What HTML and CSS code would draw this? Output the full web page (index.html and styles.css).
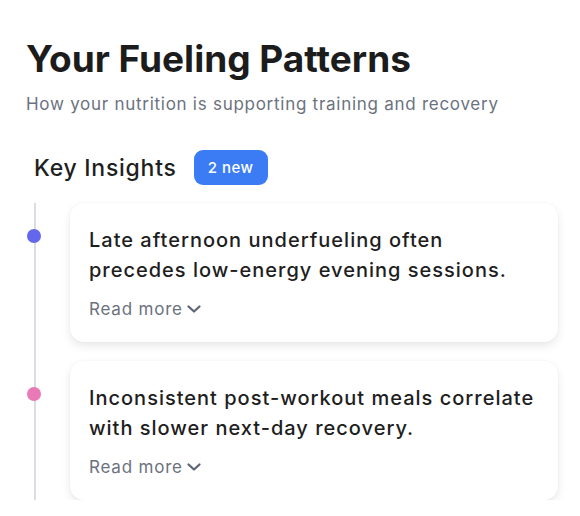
FILE: index.html
```html
<!DOCTYPE html>
<html>
<head>
<meta charset="utf-8">
<link rel="stylesheet" href="styles.css">
</head>
<body>
<main class="page">
  <header class="header">
    <h1 class="title">Your Fueling Patterns</h1>
    <p class="subtitle">How your nutrition is supporting training and recovery</p>
  </header>
  <section class="insights">
    <div class="insights-head">
      <h2 class="insights-title">Key Insights</h2>
      <span class="badge">2 new</span>
    </div>
    <div class="timeline">
      <div class="item">
        <span class="dot dot-indigo"></span>
        <article class="card">
          <p class="card-text">Late afternoon underfueling often precedes low-energy evening sessions.</p>
          <button class="more">Read more
            <svg class="chev" viewBox="0 0 16 16" width="16" height="16"><path d="M2.5 5.5l5.5 5 5.5-5" fill="none" stroke="currentColor" stroke-width="2.3" stroke-linecap="round" stroke-linejoin="round"/></svg>
          </button>
        </article>
      </div>
      <div class="item">
        <span class="dot dot-pink"></span>
        <article class="card">
          <p class="card-text">Inconsistent post-workout meals correlate with slower next-day recovery.</p>
          <button class="more">Read more
            <svg class="chev" viewBox="0 0 16 16" width="16" height="16"><path d="M2.5 5.5l5.5 5 5.5-5" fill="none" stroke="currentColor" stroke-width="2.3" stroke-linecap="round" stroke-linejoin="round"/></svg>
          </button>
        </article>
      </div>
    </div>
  </section>
</main>
</body>
</html>
```

FILE: styles.css
```css
* { box-sizing: border-box; }
html, body { margin: 0; background: #ffffff; }
body {
  font-family: Inter, "Noto Sans", "Liberation Sans", sans-serif;
  color: #1f1f1f;
}
.page {
  padding: 37px 22px 0 26px;
}
.title {
  margin: 0;
  font-size: 37px;
  line-height: 44px;
  font-weight: 700;
  letter-spacing: 0;
  color: #1c1c1c;
}
.subtitle {
  margin: 11px 0 0;
  font-size: 17px;
  line-height: 24px;
  letter-spacing: 0.73px;
  color: #6b7280;
}
.insights {
  padding-left: 8px;
  margin-top: 34px;
}
.insights-head {
  display: flex;
  align-items: center;
  gap: 17px;
}
.insights-title {
  margin: 0;
  font-size: 23px;
  font-weight: 500;
  line-height: 34px;
  letter-spacing: 0.75px;
  color: #1f1f1f;
}
.badge {
  background: #3b7cf5;
  color: #ffffff;
  font-size: 15px;
  font-weight: 500;
  letter-spacing: 0.5px;
  padding: 0 14px;
  line-height: 35px;
  height: 35px;
  border-radius: 9px;
}
.timeline {
  margin-top: 18px;
  border-left: 2px solid #dcdde3;
  display: flex;
  flex-direction: column;
  gap: 19px;
}
.item {
  position: relative;
  padding-left: 34px;
}
.dot {
  position: absolute;
  left: -9px;
  top: 26px;
  width: 14px;
  height: 14px;
  border-radius: 50%;
}
.dot-indigo { background: #6466ee; }
.dot-pink { background: #e979b7; }
.card {
  background: #ffffff;
  border-radius: 14px;
  box-shadow: 0 4px 10px rgba(0,0,0,0.09), 0 0 2px rgba(0,0,0,0.05);
  padding: 22px 20px 21px 19px;
}
.card-text {
  margin: 0;
  font-size: 20px;
  line-height: 30px;
  font-weight: 500;
  letter-spacing: 1px;
  color: #1e1e1e;
}
.more {
  margin-top: 12px;
  display: inline-flex;
  align-items: center;
  gap: 3px;
  border: 0;
  background: none;
  padding: 0;
  font-family: inherit;
  font-size: 17px;
  line-height: 24px;
  letter-spacing: 0.8px;
  color: #6b7280;
}
.chev { color: #5f6675; }
```
